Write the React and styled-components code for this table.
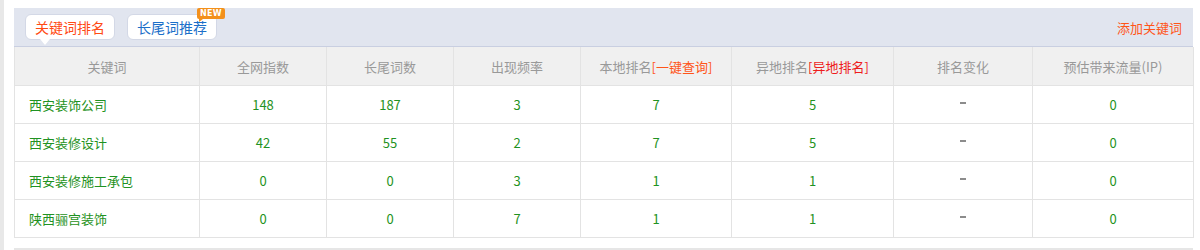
import styled, { createGlobalStyle } from 'styled-components';

const GlobalStyle = createGlobalStyle`
  html, body {
    margin: 0;
    padding: 0;
    background: #fff;
    font-family: "Noto Sans CJK SC", "Noto Sans", sans-serif;
  }
`;

//Page
const Page = styled.div`
  height: 250px;
  overflow: hidden;
  border-left: 4px solid #e8e8e8;
  padding: 8px 7px 0 10px;
  box-sizing: border-box;
`;

const Panel = styled.div`
  width: 1179px;
`;

const TabBar = styled.div`
  display: flex;
  align-items: center;
  height: 38px;
  padding: 0 11px;
  background: #e1e5ef;
  border-bottom: 1px solid #c9cfe1;
`;

const Tabs = styled.div`
  display: flex;
  gap: 12px;
  flex: 1;
`;

const Tab = styled.div`
  position: relative;
  height: 26px;
  line-height: 25px;
  padding: 0 9px;
  box-sizing: border-box;
  background: #fff;
  border: 1px solid #d3d8e6;
  border-radius: 6px;
  font-size: 14px;
  color: ${(p) => (p.$active ? '#ff4a14' : '#1c6fc9')};
  cursor: pointer;

  ${(p) =>
    p.$active &&
    `
    &::after {
      content: '';
      position: absolute;
      left: 14px;
      bottom: -6px;
      width: 0;
      height: 0;
      border-left: 5px solid transparent;
      border-right: 5px solid transparent;
      border-top: 6px solid #fff;
    }
  `}
`;

const NewBadge = styled.span`
  position: absolute;
  top: -7px;
  right: -9px;
  height: 11px;
  padding: 0 3px;
  background: #f3901b;
  border-radius: 2px;
  color: #fff;
  font-family: "DejaVu Sans", sans-serif;
  font-size: 8px;
  font-weight: bold;
  line-height: 11px;
  letter-spacing: 0.3px;

  &::after {
    content: '';
    position: absolute;
    left: 2px;
    bottom: -3px;
    border-left: 0 solid transparent;
    border-right: 4px solid transparent;
    border-top: 3px solid #f3901b;
  }
`;

const AddLink = styled.a`
  font-size: 13px;
  color: #ff5519;
  text-decoration: none;
  cursor: pointer;
`;

const Table = styled.table`
  width: 100%;
  border-collapse: collapse;
  table-layout: fixed;
  font-size: 13px;
`;

const Th = styled.th`
  height: 38px;
  padding: 0;
  background: #f0f0f0;
  border: 1px solid #e3e3e3;
  border-top: none;
  font-weight: normal;
  color: #999;
  text-align: center;
`;

const Bracket = styled.span`
  color: ${(p) => p.$color};
`;

const Td = styled.td`
  height: 37px;
  padding: 0 0 0 ${(p) => (p.$left ? '14px' : '0')};
  border: 1px solid #e3e3e3;
  color: #1f9222;
  text-align: ${(p) => (p.$left ? 'left' : 'center')};
`;

const Dash = styled.span`
  display: inline-block;
  width: 6px;
  height: 2px;
  background: #8c8c8c;
  vertical-align: middle;
  position: relative;
  top: -3px;
`;

const NextBox = styled.div`
  margin-top: 10px;
  height: 20px;
  border-top: 2px solid #e6e6e6;
`;

const widths = [185, 127, 127, 127, 151, 162, 139, 161];

const rows = [
  ['西安装饰公司', 148, 187, 3, 7, 5, 0],
  ['西安装修设计', 42, 55, 2, 7, 5, 0],
  ['西安装修施工承包', 0, 0, 3, 1, 1, 0],
  ['陕西骊宫装饰', 0, 0, 7, 1, 1, 0],
];

export default function App() {
  return (
    <Page>
      <GlobalStyle />
      <Panel>
        <TabBar>
          <Tabs>
            <Tab $active>关键词排名</Tab>
            <Tab>
              长尾词推荐
              <NewBadge>NEW</NewBadge>
            </Tab>
          </Tabs>
          <AddLink>添加关键词</AddLink>
        </TabBar>
        <Table>
          <colgroup>
            {widths.map((w, i) => (
              <col key={i} style={{ width: w }} />
            ))}
          </colgroup>
          <thead>
            <tr>
              <Th>关键词</Th>
              <Th>全网指数</Th>
              <Th>长尾词数</Th>
              <Th>出现频率</Th>
              <Th>
                本地排名<Bracket $color="#ff5519">[一键查询]</Bracket>
              </Th>
              <Th>
                异地排名<Bracket $color="#ee1c1c">[异地排名]</Bracket>
              </Th>
              <Th>排名变化</Th>
              <Th>预估带来流量(IP)</Th>
            </tr>
          </thead>
          <tbody>
            {rows.map((r) => (
              <tr key={r[0]}>
                <Td $left>{r[0]}</Td>
                <Td>{r[1]}</Td>
                <Td>{r[2]}</Td>
                <Td>{r[3]}</Td>
                <Td>{r[4]}</Td>
                <Td>{r[5]}</Td>
                <Td>
                  <Dash />
                </Td>
                <Td>{r[6]}</Td>
              </tr>
            ))}
          </tbody>
        </Table>
        <NextBox />
      </Panel>
    </Page>
  );
}
